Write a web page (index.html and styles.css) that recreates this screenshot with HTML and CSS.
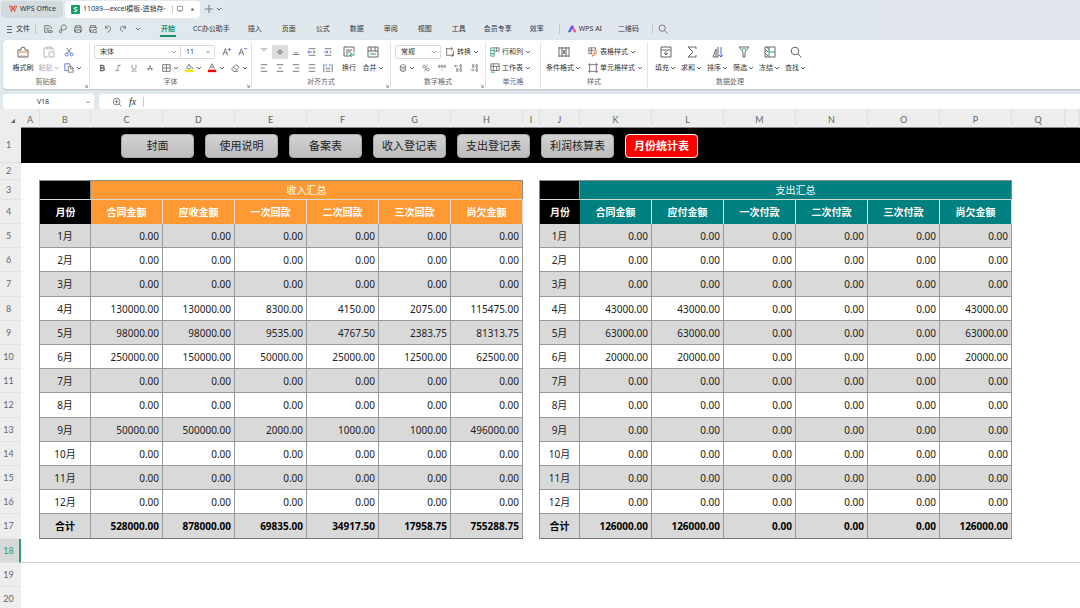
FILE: index.html
```html
<!DOCTYPE html>
<html lang="zh-CN">
<head>
    <meta charset="UTF-8">
    <meta name="viewport" content="width=device-width, initial-scale=1.0">
    <title>11089---excel模板-进销存</title>
    <link rel="stylesheet" href="styles.css">
</head>
<body>
    <svg class="defs" aria-hidden="true">
        <symbol id="i-down" viewBox="0 0 6 6"><path d="M1 2l2 2 2-2"/></symbol>
        <symbol id="i-launch" viewBox="0 0 6 6"><path d="M1 1l4 4M5 2v3H2"/></symbol>
        <symbol id="i-menu" viewBox="0 0 8 8"><path d="M1 1.500h5M1 4.500h5M1 7.500h5"/></symbol>
        <symbol id="i-save" viewBox="0 0 12 12"><path d="M10 6V4L8 2H2v8h3M4 5h4M4 7h2M6 8h5v2H6z"/></symbol>
        <symbol id="i-export" viewBox="0 0 12 12"><path d="M4 8V4a3 3 0 1 1 3 3H5"/><circle cx="3" cy="9" r="1.500"/></symbol>
        <symbol id="i-print" viewBox="0 0 12 12"><path d="M3 4V2h6v2M3 9H2V4h8v5H9M3 7h6v3H3z"/></symbol>
        <symbol id="i-preview" viewBox="0 0 12 12"><path d="M3 4V2h6v2M3 9H2V4h8v2M3 7v3h3M3 7h2M10 10l1 1"/><circle cx="8" cy="8.500" r="2"/></symbol>
        <symbol id="i-undo" viewBox="0 0 12 12"><path d="M3 2v3h3M3 5c2-4 7-2 6 1-.5 2-2 3-4 4"/></symbol>
        <symbol id="i-redo" viewBox="0 0 12 12"><path d="M9 2v3H6M9 5C7 1 2 3 3 6c.5 2 2 3 3 3"/></symbol>
        <symbol id="i-search" viewBox="0 0 12 12"><circle cx="5" cy="5" r="3.800"/><path d="M7.800 7.800L11.500 11.500"/></symbol>
        <symbol id="i-zoomin" viewBox="0 0 12 12"><circle cx="5.500" cy="5.500" r="4"/><path d="M8.500 8.500L11 11M3.500 5.500h4M5.500 3.500v4"/></symbol>
        <symbol id="i-screen" viewBox="0 0 12 12"><path d="M2 2h8v6H2zM4 10h4"/></symbol>
        <symbol id="i-plus" viewBox="0 0 12 12"><path d="M6 1v10M1 6h10"/></symbol>
        <symbol id="i-brush" viewBox="0 0 12 12"><path d="M4 4H1v7h10V4H8M4 4V2l2-1 2 1v2"/><path class="or" d="M2 6h8M4 9v2M7 9v2"/></symbol>
        <symbol id="i-paste" viewBox="0 0 12 12"><path d="M4 2H1v9h4M8 2h2v3M4 1h4v2H4zM6 6h5v5H6z"/></symbol>
        <symbol id="i-cut" viewBox="0 0 12 12"><path d="M3 1l5 7M9 1L4 8"/><g class="bl"><circle cx="3" cy="9" r="1.800"/><circle cx="9" cy="9" r="1.800"/></g></symbol>
        <symbol id="i-copy" viewBox="0 0 12 12"><path class="bl" d="M4 9H1V1h6v2"/><path d="M5 4h4l2 2v5H5zM8 4v3h3"/></symbol>
        <symbol id="i-grow" viewBox="0 0 12 12"><path d="M1 10l3-8 3 8M2 7h4"/><path class="bl" d="M9 1v4M7 3h4"/></symbol>
        <symbol id="i-shrink" viewBox="0 0 12 12"><path d="M1 10l3-8 3 8M2 7h4"/><path class="bl" d="M7 2h4"/></symbol>
        <symbol id="i-bold" viewBox="0 0 12 12"><path class="thick" d="M4 2h3a2 2 0 0 1 0 4H4zM4 6h3.500a2 2 0 0 1 0 4H4z"/></symbol>
        <symbol id="i-italic" viewBox="0 0 12 12"><path d="M5 2h5M2 10h5M8 2L4 10"/></symbol>
        <symbol id="i-under" viewBox="0 0 12 12"><path d="M3 1v4a3 3 0 0 0 6 0V1M2 10.500h8"/></symbol>
        <symbol id="i-strike" viewBox="0 0 12 12"><path d="M3 10l3-8 3 8M1 7h10"/></symbol>
        <symbol id="i-border" viewBox="0 0 12 12"><path d="M2 2h9v8H2zM6.500 2v8M2 6h9"/></symbol>
        <symbol id="i-fill" viewBox="0 0 12 12"><path d="M3 5l3-3 3 3-3 2H4zM6 1v3M10 5v2"/><path class="bar-y" d="M1 8h10v3H1z"/></symbol>
        <symbol id="i-color" viewBox="0 0 12 12"><path d="M3 7l3-6 3 6M4 5h4"/><path class="bar-r" d="M1 8h10v3H1z"/></symbol>
        <symbol id="i-eraser" viewBox="0 0 12 12"><path d="M2 7l5-5 4 3-5 5H4zM4 5l4 3M6 10h4"/></symbol>
        <symbol id="i-vtop" viewBox="0 0 12 12"><path class="soft" d="M2 2h8M4 4h4"/></symbol>
        <symbol id="i-vmid" viewBox="0 0 12 12"><path d="M4 4h4M2 6h8M4 8h4"/></symbol>
        <symbol id="i-vbot" viewBox="0 0 12 12"><path d="M4 7h4M2 9h8"/></symbol>
        <symbol id="i-outdent" viewBox="0 0 12 12"><path d="M2 2h8M7 5h3M7 7h3M2 10h8"/><path class="bl" d="M6 6H1M3 4L1 6l2 2"/></symbol>
        <symbol id="i-indent" viewBox="0 0 12 12"><path d="M2 2h8M8 5h2M8 7h2M2 10h8"/><path class="bl" d="M1 6h5M4 4l2 2-2 2"/></symbol>
        <symbol id="i-left" viewBox="0 0 12 12"><path d="M2 2h8M2 6h5M2 10h8"/></symbol>
        <symbol id="i-center" viewBox="0 0 12 12"><path d="M2 2h8M4 6h4M2 10h8"/></symbol>
        <symbol id="i-right" viewBox="0 0 12 12"><path d="M2 2h8M5 6h5M2 10h8"/></symbol>
        <symbol id="i-justify" viewBox="0 0 12 12"><path d="M2 2h8M2 6h8M2 10h8"/></symbol>
        <symbol id="i-spread" viewBox="0 0 12 12"><path d="M1 1v10M11 1v10M3 7h6M3 10h6"/><path class="bl" d="M5 1L3 3l2 2M7 1l2 2-2 2"/></symbol>
        <symbol id="i-wrap" viewBox="0 0 12 12"><path d="M7 10H1V1h10v5M3 4h6M3 6h5M3 8h2"/><path class="gr" d="M11 7v2H7M9 7L7 9l2 2"/></symbol>
        <symbol id="i-merge" viewBox="0 0 12 12"><path d="M1 1h10v10H1zM1 5h10M4 1v4M8 1v4"/><path class="gr" d="M3 8h6"/></symbol>
        <symbol id="i-convert" viewBox="0 0 12 12"><path d="M1 2h8M2 1v9h8M10 4v7M7 0l2 2-2 2M8 8l2 2-2 2"/></symbol>
        <symbol id="i-coin" viewBox="0 0 12 12"><ellipse cx="6" cy="3" rx="4" ry="2"/><path d="M2 3v6c0 3 8 3 8 0V3M2 6h8M2 9h8"/></symbol>
        <symbol id="i-percent" viewBox="0 0 12 12"><circle cx="3" cy="4" r="2"/><circle cx="9" cy="8.500" r="2"/><path d="M8 1L4 11"/></symbol>
        <symbol id="i-thousand" viewBox="0 0 12 12"><path d="M1 2h2v3H1zM5 2h2v3H5zM9 2h2v3H9zM6 8v2"/></symbol>
        <symbol id="i-decup" viewBox="0 0 12 12"><path d="M1 3h5M3 1L1 3l2 2M9 1h2v4H9zM4 7h2v4H4zM9 7h2v4H9z"/></symbol>
        <symbol id="i-decdown" viewBox="0 0 12 12"><path d="M4 1h2v4H4zM9 1h2v4H9zM1 9h5M4 7l2 2-2 2M9 7h2v4H9z"/></symbol>
        <symbol id="i-rowcol" viewBox="0 0 12 12"><path d="M5 1h6v4H5M8 1v4"/><path class="gr" d="M1 1h4v10H1zM1 4h4M1 8h4"/></symbol>
        <symbol id="i-worksheet" viewBox="0 0 12 12"><path d="M1 1h10v8H1zM1 4h10M4 1v8M8 4v5"/><path class="gr" d="M1 11h5"/></symbol>
        <symbol id="i-cond" viewBox="0 0 12 12"><path d="M1 1v10M11 1v10M4 1v10M8 1v10M1 2h10M1 10h10M5 4l2 4M7 4L5 8"/></symbol>
        <symbol id="i-tstyle" viewBox="0 0 12 12"><path d="M5 8H1V1h8v3M1 4h7M4 1v7"/><path class="or" d="M10 4L6 9l-1 2 3-1 3-5M7 7l2 2"/></symbol>
        <symbol id="i-cstyle" viewBox="0 0 12 12"><path d="M2 0v12M10 0v12M0 2h12M0 10h12"/></symbol>
        <symbol id="i-fillin" viewBox="0 0 12 12"><path d="M1 1h10v10H1zM1 4h10M6 5v4M4 7l2 2 2-2"/></symbol>
        <symbol id="i-sum" viewBox="0 0 12 12"><path d="M10 3V1H2l5 5-5 5h8V9"/></symbol>
        <symbol id="i-sort" viewBox="0 0 12 12"><path d="M1 11l3-8v8zM6 1v10H4"/><path class="bl" d="M9 1v10M7 9l2 2 2-2"/></symbol>
        <symbol id="i-filter" viewBox="0 0 12 12"><path d="M1 1h10L7 6v5H5V6z"/><path class="gr" d="M4 3h4"/></symbol>
        <symbol id="i-freeze" viewBox="0 0 12 12"><path d="M1 1h10v10H1zM1 3l3 3M1 7l3 3M3 1l2 3"/><path class="gr" d="M5 1v10M5 6h6"/></symbol>
    </svg>

    <header class="tabs">
        <button class="tab tab-home"><svg class="logo" viewBox="0 0 12 12"><path d="M1 2h4l1 4 1-4h4L8 10 6 6l-2 4z" fill="#e5392d"/><path d="M3 3l1 4M9 3L8 7" stroke="#fff"/></svg>WPS Office</button>
        <div class="tab tab-file">
            <span class="file-badge">S</span>
            <span class="file-name">11089---excel模板-进销存·</span>
            <span class="bar"></span>
            <svg class="ico small"><use href="#i-screen"/></svg>
            <span class="dot"></span>
        </div>
        <button class="ib" aria-label="新建"><svg class="ico"><use href="#i-plus"/></svg></button>
        <button class="ib" aria-label="更多"><svg class="caret"><use href="#i-down"/></svg></button>
    </header>

    <nav class="menu">
        <button class="file-menu"><svg class="ico small"><use href="#i-menu"/></svg>文件</button>
        <span class="sep"></span>
        <div class="quick">
            <button aria-label="保存"><svg class="ico"><use href="#i-save"/></svg></button>
            <button aria-label="输出"><svg class="ico"><use href="#i-export"/></svg></button>
            <button aria-label="打印"><svg class="ico"><use href="#i-print"/></svg></button>
            <button aria-label="预览"><svg class="ico"><use href="#i-preview"/></svg></button>
            <button aria-label="撤销"><svg class="ico"><use href="#i-undo"/></svg></button>
            <button aria-label="恢复"><svg class="ico"><use href="#i-redo"/></svg></button>
            <button aria-label="更多"><svg class="caret"><use href="#i-down"/></svg></button>
        </div>
        <button class="mi on">开始</button>
        <button class="mi">CC办公助手</button>
        <button class="mi">插入</button>
        <button class="mi">页面</button>
        <button class="mi">公式</button>
        <button class="mi">数据</button>
        <button class="mi">审阅</button>
        <button class="mi">视图</button>
        <button class="mi">工具</button>
        <button class="mi">会员专享</button>
        <button class="mi">效率</button>
        <span class="sep"></span>
        <button class="mi ai"><svg class="logo" viewBox="0 0 12 12"><path d="M1 10L5 2h3L4 10z" fill="#3b5bff"/><path d="M5 2h2l2 4-2 1z" fill="#a03cff"/><path d="M7 6h3l1 4H8z" fill="#ff4fa0"/></svg>WPS AI</button>
        <button class="mi">二维码</button>
        <span class="sep"></span>
        <button class="ib" aria-label="搜索"><svg class="ico"><use href="#i-search"/></svg></button>
    </nav>

    <section class="ribbon">
        <div class="group g-clip">
            <div class="tools">
                <button class="big"><svg class="ico large"><use href="#i-brush"/></svg><span>格式刷</span></button>
                <button class="big off"><svg class="ico large"><use href="#i-paste"/></svg><span>粘贴<svg class="caret"><use href="#i-down"/></svg></span></button>
                <div class="stack">
                    <button aria-label="剪切"><svg class="ico"><use href="#i-cut"/></svg></button>
                    <button aria-label="复制"><svg class="ico"><use href="#i-copy"/></svg><svg class="caret"><use href="#i-down"/></svg></button>
                </div>
            </div>
            <div class="name">剪贴板</div>
            <svg class="launch"><use href="#i-launch"/></svg>
        </div>
        <div class="group g-font">
            <div class="tools stack">
                <div class="line">
                    <label class="pick font"><select aria-label="字体"><option>宋体</option></select><svg class="caret"><use href="#i-down"/></svg></label>
                    <label class="pick size"><select aria-label="字号"><option>11</option></select><svg class="caret"><use href="#i-down"/></svg></label>
                    <button class="sq push" aria-label="增大字号"><svg class="ico"><use href="#i-grow"/></svg></button>
                    <button class="sq" aria-label="减小字号"><svg class="ico"><use href="#i-shrink"/></svg></button>
                </div>
                <div class="line">
                    <button class="sq" aria-label="加粗"><svg class="ico small"><use href="#i-bold"/></svg></button>
                    <button class="sq" aria-label="倾斜"><svg class="ico small"><use href="#i-italic"/></svg></button>
                    <button class="sq" aria-label="下划线"><svg class="ico small"><use href="#i-under"/></svg></button>
                    <button class="sq" aria-label="删除线"><svg class="ico small"><use href="#i-strike"/></svg></button>
                    <button class="drop" aria-label="边框"><svg class="ico"><use href="#i-border"/></svg><svg class="caret"><use href="#i-down"/></svg></button>
                    <button class="drop" aria-label="填充颜色"><svg class="ico"><use href="#i-fill"/></svg><svg class="caret"><use href="#i-down"/></svg></button>
                    <button class="drop" aria-label="字体颜色"><svg class="ico"><use href="#i-color"/></svg><svg class="caret"><use href="#i-down"/></svg></button>
                    <button class="drop" aria-label="清除"><svg class="ico"><use href="#i-eraser"/></svg><svg class="caret"><use href="#i-down"/></svg></button>
                </div>
            </div>
            <div class="name">字体</div>
            <svg class="launch"><use href="#i-launch"/></svg>
        </div>
        <div class="group g-align">
            <div class="tools">
                <div class="stack">
                    <div class="line">
                        <button class="sq" aria-label="顶端对齐"><svg class="ico"><use href="#i-vtop"/></svg></button>
                        <button class="sq on" aria-label="垂直居中"><svg class="ico"><use href="#i-vmid"/></svg></button>
                        <button class="sq" aria-label="底端对齐"><svg class="ico"><use href="#i-vbot"/></svg></button>
                        <button class="sq" aria-label="减少缩进"><svg class="ico"><use href="#i-outdent"/></svg></button>
                        <button class="sq" aria-label="增加缩进"><svg class="ico"><use href="#i-indent"/></svg></button>
                    </div>
                    <div class="line">
                        <button class="sq" aria-label="左对齐"><svg class="ico"><use href="#i-left"/></svg></button>
                        <button class="sq" aria-label="居中"><svg class="ico"><use href="#i-center"/></svg></button>
                        <button class="sq" aria-label="右对齐"><svg class="ico"><use href="#i-right"/></svg></button>
                        <button class="sq" aria-label="两端对齐"><svg class="ico"><use href="#i-justify"/></svg></button>
                        <button class="sq" aria-label="分散对齐"><svg class="ico"><use href="#i-spread"/></svg></button>
                    </div>
                </div>
                <button class="big"><svg class="ico large"><use href="#i-wrap"/></svg><span>换行</span></button>
                <button class="big"><svg class="ico large"><use href="#i-merge"/></svg><span>合并<svg class="caret"><use href="#i-down"/></svg></span></button>
            </div>
            <div class="name">对齐方式</div>
            <svg class="launch"><use href="#i-launch"/></svg>
        </div>
        <div class="group g-num">
            <div class="tools stack">
                <div class="line">
                    <label class="pick num"><select aria-label="数字格式"><option>常规</option></select><svg class="caret"><use href="#i-down"/></svg></label>
                    <button class="row push"><svg class="ico"><use href="#i-convert"/></svg>转换<svg class="caret"><use href="#i-down"/></svg></button>
                </div>
                <div class="line">
                    <button class="drop" aria-label="货币"><svg class="ico small"><use href="#i-coin"/></svg><svg class="caret"><use href="#i-down"/></svg></button>
                    <button class="sq" aria-label="百分比"><svg class="ico small"><use href="#i-percent"/></svg></button>
                    <button class="sq" aria-label="千分位"><svg class="ico small"><use href="#i-thousand"/></svg></button>
                    <button class="sq" aria-label="增加小数"><svg class="ico small"><use href="#i-decup"/></svg></button>
                    <button class="sq" aria-label="减少小数"><svg class="ico small"><use href="#i-decdown"/></svg></button>
                </div>
            </div>
            <div class="name">数字格式</div>
            <svg class="launch"><use href="#i-launch"/></svg>
        </div>
        <div class="group g-cells">
            <div class="tools stack">
                <button class="row"><svg class="ico"><use href="#i-rowcol"/></svg>行和列<svg class="caret"><use href="#i-down"/></svg></button>
                <button class="row"><svg class="ico"><use href="#i-worksheet"/></svg>工作表<svg class="caret"><use href="#i-down"/></svg></button>
            </div>
            <div class="name">单元格</div>
        </div>
        <div class="group g-style">
            <div class="tools">
                <button class="big"><svg class="ico large"><use href="#i-cond"/></svg><span>条件格式<svg class="caret"><use href="#i-down"/></svg></span></button>
                <div class="stack">
                    <button class="row"><svg class="ico"><use href="#i-tstyle"/></svg>表格样式<svg class="caret"><use href="#i-down"/></svg></button>
                    <button class="row"><svg class="ico"><use href="#i-cstyle"/></svg>单元格样式<svg class="caret"><use href="#i-down"/></svg></button>
                </div>
            </div>
            <div class="name">样式</div>
        </div>
        <div class="group g-data">
            <div class="tools">
                <button class="big"><svg class="ico large"><use href="#i-fillin"/></svg><span>填充<svg class="caret"><use href="#i-down"/></svg></span></button>
                <button class="big"><svg class="ico large"><use href="#i-sum"/></svg><span>求和<svg class="caret"><use href="#i-down"/></svg></span></button>
                <button class="big"><svg class="ico large"><use href="#i-sort"/></svg><span>排序<svg class="caret"><use href="#i-down"/></svg></span></button>
                <button class="big"><svg class="ico large"><use href="#i-filter"/></svg><span>筛选<svg class="caret"><use href="#i-down"/></svg></span></button>
                <button class="big"><svg class="ico large"><use href="#i-freeze"/></svg><span>冻结<svg class="caret"><use href="#i-down"/></svg></span></button>
                <button class="big"><svg class="ico large"><use href="#i-search"/></svg><span>查找<svg class="caret"><use href="#i-down"/></svg></span></button>
            </div>
            <div class="name">数据处理</div>
        </div>
    </section>

    <div class="formula">
        <label class="cell-name"><input type="text" value="V18" aria-label="名称框"><svg class="caret"><use href="#i-down"/></svg></label>
        <div class="fx-box">
            <svg class="ico"><use href="#i-zoomin"/></svg>
            <label class="fx" for="fx">fx</label>
            <input type="text" id="fx">
        </div>
    </div>

    <main class="sheet">
        <table class="grid">
            <colgroup>
                <col class="c-num"><col class="c-a"><col class="c-b">
                <col class="c-w"><col class="c-w"><col class="c-w"><col class="c-w"><col class="c-w"><col class="c-w">
                <col class="c-i"><col class="c-j">
                <col class="c-w"><col class="c-w"><col class="c-w"><col class="c-w"><col class="c-w"><col class="c-w">
                <col class="c-q"><col>
            </colgroup>
            <thead>
                <tr>
                    <th class="corner"><svg class="tri" viewBox="0 0 6 6"><path d="M6 1v5H1z"/></svg></th>
                    <th>A</th><th>B</th><th>C</th><th>D</th><th>E</th><th>F</th><th>G</th><th>H</th><th>I</th>
                    <th>J</th><th>K</th><th>L</th><th>M</th><th>N</th><th>O</th><th>P</th><th>Q</th><th></th>
                </tr>
            </thead>
            <tbody id="rows">
                <tr class="r-nav">
                    <th>1</th>
                    <td colspan="18">
                        <div class="links">
                            <button>封面</button>
                            <button>使用说明</button>
                            <button>备案表</button>
                            <button>收入登记表</button>
                            <button>支出登记表</button>
                            <button>利润核算表</button>
                            <button class="on">月份统计表</button>
                        </div>
                    </td>
                </tr>
                <tr class="r-gap"><th>2</th><td colspan="18"></td></tr>
                <tr class="r-title">
                    <th>3</th><td class="edge"></td>
                    <td class="month"></td><td class="in" colspan="6">收入汇总</td>
                    <td class="edge"></td>
                    <td class="month"></td><td class="out" colspan="6">支出汇总</td>
                    <td colspan="2"></td>
                </tr>
                <tr class="r-head">
                    <th>4</th><td class="edge"></td>
                    <td class="month">月份</td>
                    <td class="in">合同金额</td><td class="in">应收金额</td><td class="in">一次回款</td><td class="in">二次回款</td><td class="in">三次回款</td><td class="in">尚欠金额</td>
                    <td class="edge"></td>
                    <td class="month">月份</td>
                    <td class="out">合同金额</td><td class="out">应付金额</td><td class="out">一次付款</td><td class="out">二次付款</td><td class="out">三次付款</td><td class="out">尚欠金额</td>
                    <td colspan="2"></td>
                </tr>
            </tbody>
        </table>
    </main>

    <script>
        // 有发生额的月份
        const income = {
            4: [130000, 130000, 8300, 4150, 2075, 115475],
            5: [98000, 98000, 9535, 4767.5, 2383.75, 81313.75],
            6: [250000, 150000, 50000, 25000, 12500, 62500],
            9: [50000, 500000, 2000, 1000, 1000, 496000]
        };
        const expense = {
            4: [43000, 43000, 0, 0, 0, 43000],
            5: [63000, 63000, 0, 0, 0, 63000],
            6: [20000, 20000, 0, 0, 0, 20000]
        };
        const zero = [0, 0, 0, 0, 0, 0];

        function sum(data) {
            return zero.map((z, i) => Object.values(data).reduce((t, r) => t + r[i], 0));
        }

        function cells(label, values) {
            return '<td class="m">' + label + '</td>' +
                values.map(v => '<td class="n">' + v.toFixed(2) + '</td>').join('');
        }

        let html = '';
        for (let m = 1; m <= 13; m++) {
            const total = m === 13;
            const label = total ? '合计' : m + '月';
            html += '<tr class="r-data' + (m % 2 ? ' odd' : '') + (total ? ' total' : '') + '">' +
                '<th>' + (m + 4) + '</th><td class="edge"></td>' +
                cells(label, total ? sum(income) : income[m] || zero) +
                '<td class="edge"></td>' +
                cells(label, total ? sum(expense) : expense[m] || zero) +
                '<td colspan="2"></td></tr>';
        }
        for (let r = 18; r <= 20; r++) {
            html += '<tr class="r-empty' + (r === 18 ? ' current' : '') + '"><th>' + r + '</th><td colspan="18"></td></tr>';
        }
        document.getElementById('rows').insertAdjacentHTML('beforeend', html);
    </script>
</body>
</html>
```
FILE: styles.css
```css
* {
    box-sizing: border-box;
}
body {
    margin: 0;
    height: 100vh;
    display: flex;
    flex-direction: column;
    overflow: hidden;
    background: linear-gradient(90deg, #e0e9ed, #e0e5ee);
    color: #333;
    font-family: "Noto Sans", "Noto Sans CJK SC", sans-serif;
    font-size: 7px;
    line-height: 10px;
}
button, input, select {
    margin: 0;
    padding: 0;
    border: none;
    background: none;
    color: inherit;
    font: inherit;
    outline: none;
}
button {
    display: flex;
    align-items: center;
    justify-content: center;
    white-space: nowrap;
}

/* icons */
.defs {
    display: none;
}
.ico, .caret, .launch {
    width: 10px;
    height: 10px;
    flex: none;
    fill: none;
    stroke: #666;
    stroke-width: 1;
}
.ico.small {
    width: 8px;
    height: 8px;
}
.ico.large {
    width: 12px;
    height: 12px;
}
.caret {
    width: 6px;
    height: 6px;
}
.logo {
    width: 10px;
    height: 10px;
    fill: none;
}
.bl { stroke: #3f6be8; }
.gr { stroke: #2a9d74; }
.or { stroke: #e8743b; }
.soft { stroke: #999; }
.thick { stroke-width: 2; }
.bar-y { fill: #f2ee00; stroke: none; }
.bar-r { fill: #f00; stroke: none; }

/* window tabs */
.tabs {
    display: flex;
    align-items: center;
    height: 18px;
    gap: 2px;
    padding-left: 1px;
}
.tab {
    display: flex;
    align-items: center;
    height: 17px;
    border-radius: 4px;
}
.tab-home {
    width: 62px;
    gap: 2px;
    background: #d3dade;
}
.tab-file {
    width: 135px;
    padding: 0 6px;
    margin-right: 2px;
    gap: 3px;
    background: #fff;
}
.file-badge {
    width: 9px;
    height: 9px;
    border-radius: 1px;
    background: #12a068;
    color: #fff;
    font-weight: bold;
    line-height: 9px;
    text-align: center;
}
.file-name {
    flex: 1;
    white-space: nowrap;
    overflow: hidden;
}
.bar {
    width: 1px;
    height: 8px;
    background: #ccc;
}
.dot {
    width: 3px;
    height: 3px;
    margin-left: 4px;
    border-radius: 50%;
    background: #888;
}

/* menu */
.menu {
    display: flex;
    align-items: center;
    height: 22px;
    padding-left: 6px;
}
.file-menu {
    gap: 2px;
}
.sep {
    width: 1px;
    height: 10px;
    margin: 0 5px;
    background: #c3cace;
}
.quick {
    display: flex;
    gap: 1px;
    margin-right: 6px;
}
.quick button {
    width: 14px;
    height: 12px;
}
.mi {
    min-width: 34px;
    height: 16px;
    padding: 0 8px;
    gap: 2px;
}
.mi.on {
    position: relative;
    color: #1a8f68;
    font-weight: bold;
}
.mi.on::after {
    content: "";
    position: absolute;
    left: 9px;
    right: 9px;
    bottom: 0;
    height: 2px;
    background: #1a8f68;
}
.mi.ai {
    padding: 0 8px 0 2px;
}

/* ribbon */
.ribbon {
    display: flex;
    height: 49px;
    margin-left: 3px;
    padding-top: 2px;
    border-radius: 4px 0 0 4px;
    background: #fff;
    box-shadow: 0 1px 2px #b8c2ca;
}
.group {
    position: relative;
    height: 46px;
    padding: 3px 4px 0;
    border-right: 1px solid #e4e4e4;
}
.group:last-child {
    border: none;
}
.g-clip { width: 87px; }
.g-font { width: 162px; }
.g-align { width: 139px; }
.g-num { width: 95px; }
.g-cells { width: 55px; }
.g-style { width: 107px; }
.g-data { width: 164px; }
.tools {
    display: flex;
    height: 30px;
    gap: 4px;
}
.stack {
    display: flex;
    flex-direction: column;
    align-items: flex-start;
    justify-content: space-between;
    gap: 2px;
}
.stack button {
    height: 14px;
    gap: 2px;
}
.line {
    display: flex;
    align-items: center;
    height: 14px;
}
.big {
    flex-direction: column;
    justify-content: space-between;
    min-width: 22px;
    padding: 1px 0 2px;
}
.big span {
    display: flex;
    align-items: center;
    gap: 1px;
}
.off {
    opacity: .45;
}
.g-clip .tools {
    padding-left: 5px;
}
.g-align .tools {
    gap: 2px;
}
.g-style .tools {
    padding-left: 1px;
    gap: 7px;
}
.g-data .tools {
    gap: 5px;
    padding-left: 3px;
}
.g-data .big {
    min-width: 21px;
}
.sq {
    width: 16px;
}
.sq.on {
    border-radius: 2px;
    background: #dedede;
}
.drop {
    width: 23px;
}
.push {
    margin-left: 4px;
}
.pick {
    position: relative;
    display: flex;
    height: 14px;
    border: 1px solid #d9d9d9;
}
.pick select {
    width: 100%;
    padding-left: 5px;
    appearance: none;
}
.pick .caret, .cell-name .caret {
    position: absolute;
    right: 3px;
    top: 3px;
    stroke: #999;
}
.pick.font {
    width: 87px;
    border-radius: 2px 0 0 2px;
}
.pick.size {
    width: 34px;
    border-left: none;
    border-radius: 0 2px 2px 0;
}
.pick.num {
    width: 46px;
    border-radius: 2px;
}
.name {
    margin-top: 2px;
    line-height: 10px;
    color: #666;
    text-align: center;
}
.launch {
    position: absolute;
    right: 1px;
    bottom: 0;
    width: 4px;
    height: 4px;
}

/* formula bar */
.formula {
    display: flex;
    gap: 5px;
    height: 15px;
    margin: 5px 0 0 3px;
}
.cell-name, .fx-box {
    position: relative;
    display: flex;
    align-items: center;
    background: #fff;
    border-radius: 3px;
}
.cell-name {
    width: 91px;
}
.cell-name input {
    width: 80px;
    text-align: center;
}
.cell-name .caret {
    top: 5px;
}
.fx-box {
    flex: 1;
    gap: 7px;
    padding-left: 13px;
    border-radius: 3px 0 0 3px;
}
.fx {
    font: italic 10px/12px "Liberation Serif", serif;
}
.fx-box input {
    flex: 1;
    height: 10px;
    padding-left: 4px;
    border-left: 1px solid #ccc;
}

/* sheet */
.sheet {
    flex: 1;
    overflow: hidden;
    background: #fff;
}
.grid {
    width: 100%;
    table-layout: fixed;
    border-collapse: separate;
    border-spacing: 0;
    font-size: 10px;
    line-height: 14px;
}
.c-num { width: 21px; }
.c-a { width: 19px; }
.c-b { width: 51px; }
.c-w { width: 72px; }
.c-i { width: 17px; }
.c-j { width: 40px; }
.c-q { width: 53px; }
.grid th, .grid td {
    padding: 0;
    white-space: nowrap;
}
.grid th {
    background: #ededed;
    color: #666;
    font-family: Lato, sans-serif;
    font-size: 9px;
    font-weight: normal;
}
.grid thead th {
    height: 19px;
    padding-top: 4px;
    border-right: 1px solid #e0e0e0;
    border-bottom: 1px solid #888;
}
.grid tbody th {
    padding-right: 4px;
    border-bottom: 1px solid #e2e2e2;
}
.grid thead .corner {
    padding-left: 4px;
    border-color: #ededed;
}
.tri {
    width: 5px;
    height: 5px;
    fill: #666;
}
.r-nav { height: 35px; }
.r-gap { height: 17px; }
.r-title { height: 20px; }
.r-head, .r-data, .r-empty { height: 24px; }
.grid tbody tr:nth-child(5n+7) { height: 25px; }
.r-nav td {
    background: #000;
}
.links {
    display: flex;
    gap: 11px;
    padding-left: 100px;
}
.links button {
    width: 73px;
    height: 24px;
    border: 1px solid #aaa;
    border-radius: 4px;
    background: linear-gradient(#d2d2d2, #bdbdbd);
    color: #222;
    font-size: 11px;
}
.links .on {
    border-color: #fff;
    background: #f00;
    color: #fff;
    font-weight: bold;
}
.month, .in, .out, .m {
    text-align: center;
}
.edge {
    border-right: 1px solid #8c8c8c;
}
.month {
    background: #000;
    color: #fff;
}
.in {
    background: #ff9933;
    color: #fff;
}
.out {
    background: #008080;
    color: #fff;
}
.r-title .month, .r-title .in, .r-title .out {
    border-top: 1px solid #8c8c8c;
    border-right: 1px solid #8c8c8c;
    border-bottom: 1px solid #d8dcd8;
}
.r-head {
    font-weight: bold;
}
.r-head .in, .r-head .out {
    border-right: 1px solid #e6dcd0;
}
.m, .n {
    border-right: 1px solid #999;
    border-bottom: 1px solid #999;
    color: #222;
}
.grid .n {
    padding-right: 3px;
    text-align: right;
}
.odd .m, .odd .n {
    background: #d9d9d9;
}
.total .m, .total .n {
    border-bottom-color: #777;
    color: #000;
    font-weight: bold;
}
.current td {
    border-bottom: 1px solid #d0d0d0;
}
.grid .current th {
    padding-right: 2px;
    border-right: 2px solid #2a9d74;
    background: #d8d8d8;
    color: #2a9d74;
}
```
